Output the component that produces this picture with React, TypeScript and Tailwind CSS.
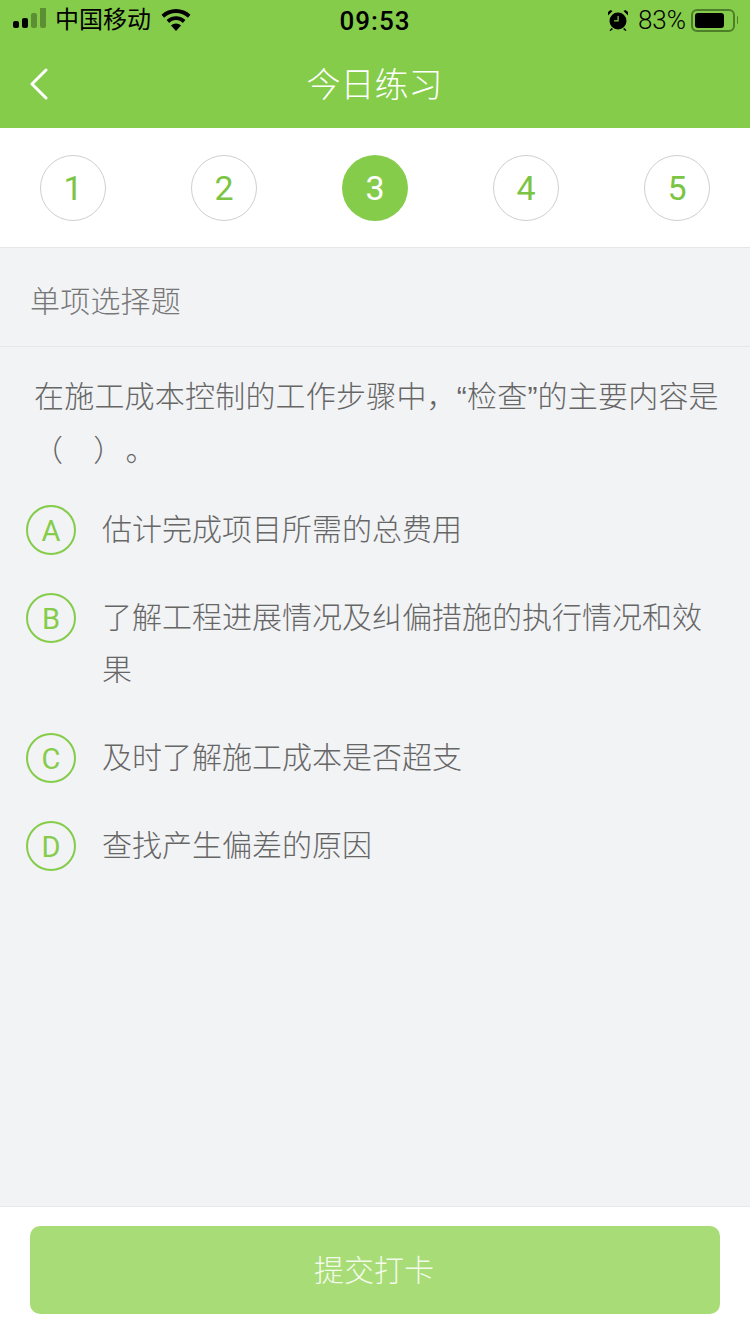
const cjk = "font-['Liberation_Sans','Noto_Sans_CJK_SC',sans-serif]";
const latin = "font-['Roboto','Noto_Sans_CJK_SC',sans-serif]";

const steps = [1, 2, 3, 4, 5];
const options = [
  { key: 'A', text: '估计完成项目所需的总费用' },
  { key: 'B', text: '了解工程进展情况及纠偏措施的执行情况和效果' },
  { key: 'C', text: '及时了解施工成本是否超支' },
  { key: 'D', text: '查找产生偏差的原因' },
];

function StatusBar() {
  return (
    <div className="relative flex h-10 items-center justify-between pl-[13px] pr-[12px] text-black">
      <div className="flex items-center">
        {/* signal */}
        <svg width="34" height="24" viewBox="0 0 34 24" fill="currentColor">
          <rect x="0" y="13" width="6" height="7" rx="2" />
          <rect x="9" y="10" width="6" height="10" rx="2" />
          <rect x="18" y="5" width="6" height="15" rx="2" opacity="0.3" />
          <rect x="27" y="-1" width="6" height="21" rx="2" opacity="0.3" />
        </svg>
        <span className="ml-2 text-[24px] leading-none">中国移动</span>
        {/* wifi */}
        <svg className="ml-[10px]" width="30" height="22" viewBox="0 0 30 22" fill="currentColor">
          <path d="M15 0C9.300 0 4.200 2.200.5 5.800l2.600 2.900C6.200 5.700 10.400 3.900 15 3.900s8.800 1.800 11.900 4.800l2.600-2.900C25.800 2.200 20.700 0 15 0z" />
          <path d="M15 7.200c-3.700 0-7 1.400-9.400 3.800l2.600 2.900c1.700-1.700 4.100-2.800 6.800-2.800s5.100 1.100 6.800 2.800l2.600-2.900c-2.400-2.400-5.700-3.800-9.400-3.800z" />
          <path d="M15 14.400c-2 0-3.700.8-5 2l5 5.600 5-5.600c-1.300-1.200-3-2-5-2z" />
        </svg>
      </div>
      <span className={`absolute left-1/2 top-[8px] -translate-x-1/2 text-[26px] font-medium leading-[26px] tracking-[1px] ${latin}`}>09:53</span>
      <div className="flex items-center">
        {/* alarm */}
        <svg width="22" height="22" viewBox="0 0 22 22" fill="currentColor">
          <circle cx="11" cy="12" r="8.500" />
          <path d="M1 6.500 5.500 2 3.500 1 1 3zM21 6.500 16.500 2 18.500 1 21 3zM4.500 19l-2 2.500 1 .5 2.500-2zM17.500 19l2 2.500-1 .5-2.500-2z" />
          <path d="M10.500 7h1.200v5.500H7v-1.200h3.500z" fill="#85cc4b" />
        </svg>
        <span className={`ml-[9px] text-[26px] font-light leading-none ${latin}`}>83%</span>
        <div className="ml-[5px] flex h-[23px] w-[44px] items-center rounded-[6px] border-2 border-[#4d7f2b] p-[2px]">
          <div className="h-full w-[29px] rounded-[3px] bg-black" />
        </div>
        <div className="ml-[2px] h-[8px] w-[1px] rounded-r-sm bg-[#4d7f2b]" />
      </div>
    </div>
  );
}

export default function App() {
  return (
    <div className={`flex min-h-[1334px] flex-col bg-[#f2f3f5] ${cjk}`}>
      <header className="h-[128px] bg-[#85cc4b]">
        <StatusBar />
        <div className="relative flex h-[88px] items-center justify-center pt-[2px]">
          <svg className="absolute left-[28px] top-[28px]" width="22" height="32" viewBox="0 0 22 32" fill="none" stroke="white" strokeWidth="3" strokeLinecap="round" strokeLinejoin="round">
            <path d="M18 2 4 16l14 14" />
          </svg>
          <h1 className="pr-[1px] text-[34px] font-light leading-none text-white">今日练习</h1>
        </div>
      </header>

      <div className={`flex h-[120px] items-center justify-between border-b border-[#e6e6e6] bg-white px-[40px] pt-px ${latin}`}>
        {steps.map((n) =>
          n === 3 ? (
            <div key={n} className="flex h-[66px] w-[66px] items-center justify-center rounded-full bg-[#85cc4b] text-[34px] text-white">
              {n}
            </div>
          ) : (
            <div key={n} className="flex h-[66px] w-[66px] items-center justify-center rounded-full border border-[#cfcfcf] text-[34px] text-[#7cc443]">
              {n}
            </div>
          ),
        )}
      </div>

      <div className="flex h-[99px] items-center border-b border-[#e6e7e9] pl-[30px] pt-[8px] text-[30px] font-light tracking-[0.2px] text-[#777777]">
        单项选择题
      </div>

      <p className="pl-[34px] pr-[20px] pt-[23px] text-[30px] font-light leading-[54px] tracking-[0.2px] text-[#666666]">
        在施工成本控制的工作步骤中，“检查”的主要内容是<span className="ml-[-1px]">（<span className="inline-block w-[30px]" />）</span><span className="ml-[17px]">。</span>
      </p>

      <div className="mt-[27px] flex flex-col gap-[36px] pl-[26px] pr-[40px]">
        {options.map((o) => (
          <div key={o.key} className="flex items-start">
            <div className={`flex h-[50px] w-[50px] flex-none items-center justify-center rounded-full border-2 border-[#85cc4b] pt-[3px] text-[29px] text-[#85cc4b] ${latin}`}>
              {o.key}
            </div>
            <div className="ml-[26px] -translate-y-px text-[30px] font-light leading-[52px] text-[#666666]">{o.text}</div>
          </div>
        ))}
      </div>

      <div className="mt-auto h-[128px] border-t border-[#e8e8e8] bg-white px-[30px] pt-[19px]">
        <button className="flex h-[88px] w-full items-center justify-center rounded-[10px] bg-[#a8dc77] pr-[2px] text-[30px] font-light text-[#f3fbea]">
          提交打卡
        </button>
      </div>
    </div>
  );
}
